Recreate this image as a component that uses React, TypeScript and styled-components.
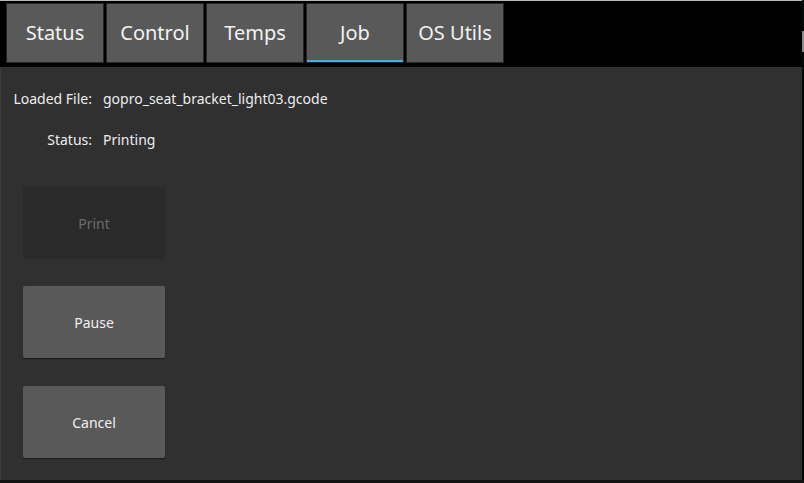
import React from "react";
import styled, { createGlobalStyle } from "styled-components";

const Global = createGlobalStyle`
  html, body { margin: 0; padding: 0; background: #0c0c0c; }
  body { font-family: "Noto Sans", "Open Sans", sans-serif; }
  #root { width: 804px; height: 483px; overflow: hidden; }
`;

const Screen = styled.div`
  width: 804px;
  height: 483px;
  display: flex;
  flex-direction: column;
  background: #0c0c0c;
`;

const Main = styled.div`
  display: flex;
  height: 480px;
`;

const Window = styled.div`
  width: 802px;
  height: 480px;
  display: flex;
  flex-direction: column;
  background: #000;
  border-top: 1px solid #b9b9b9;
  box-sizing: border-box;
`;

const Edge = styled.div`
  width: 2px;
  display: flex;
  flex-direction: column;
  padding-top: 31px;
  background: #060808;
`;

const EdgeThumb = styled.div`
  height: 21px;
  background: #8a8a8a;
`;

const TabBar = styled.div`
  height: 66px;
  flex-shrink: 0;
  display: flex;
  gap: 2px;
  padding: 2px 0 0 6px;
  box-sizing: border-box;
`;

const Tab = styled.div<{ $active?: boolean }>`
  width: 98px;
  height: 60px;
  box-sizing: border-box;
  border: 1px solid #262626;
  background: #595959;
  color: #f2f2f2;
  font-size: 20px;
  display: flex;
  align-items: center;
  justify-content: center;
  padding-bottom: 1px;
  box-shadow: ${(p) => (p.$active ? "inset 0 -2px 0 #33b5e5" : "none")};
`;

const Panel = styled.div`
  flex: 1;
  background: #303030;
  padding: 20px 0 0 12px;
  display: flex;
  flex-direction: column;
  color: #eeeeee;
  font-size: 14px;
  border-left: 1px solid #3a3a3a;
`;

const InfoRow = styled.div<{ $gap?: number }>`
  display: flex;
  align-items: center;
  height: 22px;
  margin-bottom: ${(p) => p.$gap ?? 0}px;
`;

const Label = styled.span`
  width: 79px;
  text-align: right;
  white-space: nowrap;
`;

const Value = styled.span`
  margin-left: 11px;
  white-space: nowrap;
`;

const Buttons = styled.div`
  display: flex;
  flex-direction: column;
  margin-left: 10px;
`;

const ActionButton = styled.div<{ $disabled?: boolean; $top?: number }>`
  width: 142px;
  height: 72px;
  margin-top: ${(p) => p.$top ?? 0}px;
  border-radius: 2px;
  display: flex;
  align-items: center;
  justify-content: center;
  font-size: 14px;
  padding-top: 1px;
  box-sizing: border-box;
  background: ${(p) => (p.$disabled ? "#2a2a2a" : "#595959")};
  color: ${(p) => (p.$disabled ? "#6a6a6a" : "#f0f0f0")};
  box-shadow: ${(p) => (p.$disabled ? "none" : "0 1px 1px rgba(0,0,0,0.45)")};
`;

const BottomStrip = styled.div`
  height: 3px;
  background: #121212;
`;

export default function App() {
  const tabs = ["Status", "Control", "Temps", "Job", "OS Utils"];
  return (
    <>
      <Global />
      <Screen>
        <Main>
          <Window>
            <TabBar>
              {tabs.map((t) => (
                <Tab key={t} $active={t === "Job"}>
                  {t}
                </Tab>
              ))}
            </TabBar>
            <Panel>
              <InfoRow $gap={19}>
                <Label>Loaded File:</Label>
                <Value>gopro_seat_bracket_light03.gcode</Value>
              </InfoRow>
              <InfoRow $gap={37}>
                <Label>Status:</Label>
                <Value>Printing</Value>
              </InfoRow>
              <Buttons>
                <ActionButton $disabled>Print</ActionButton>
                <ActionButton $top={27}>Pause</ActionButton>
                <ActionButton $top={28}>Cancel</ActionButton>
              </Buttons>
            </Panel>
          </Window>
          <Edge>
            <EdgeThumb />
          </Edge>
        </Main>
        <BottomStrip />
      </Screen>
    </>
  );
}
